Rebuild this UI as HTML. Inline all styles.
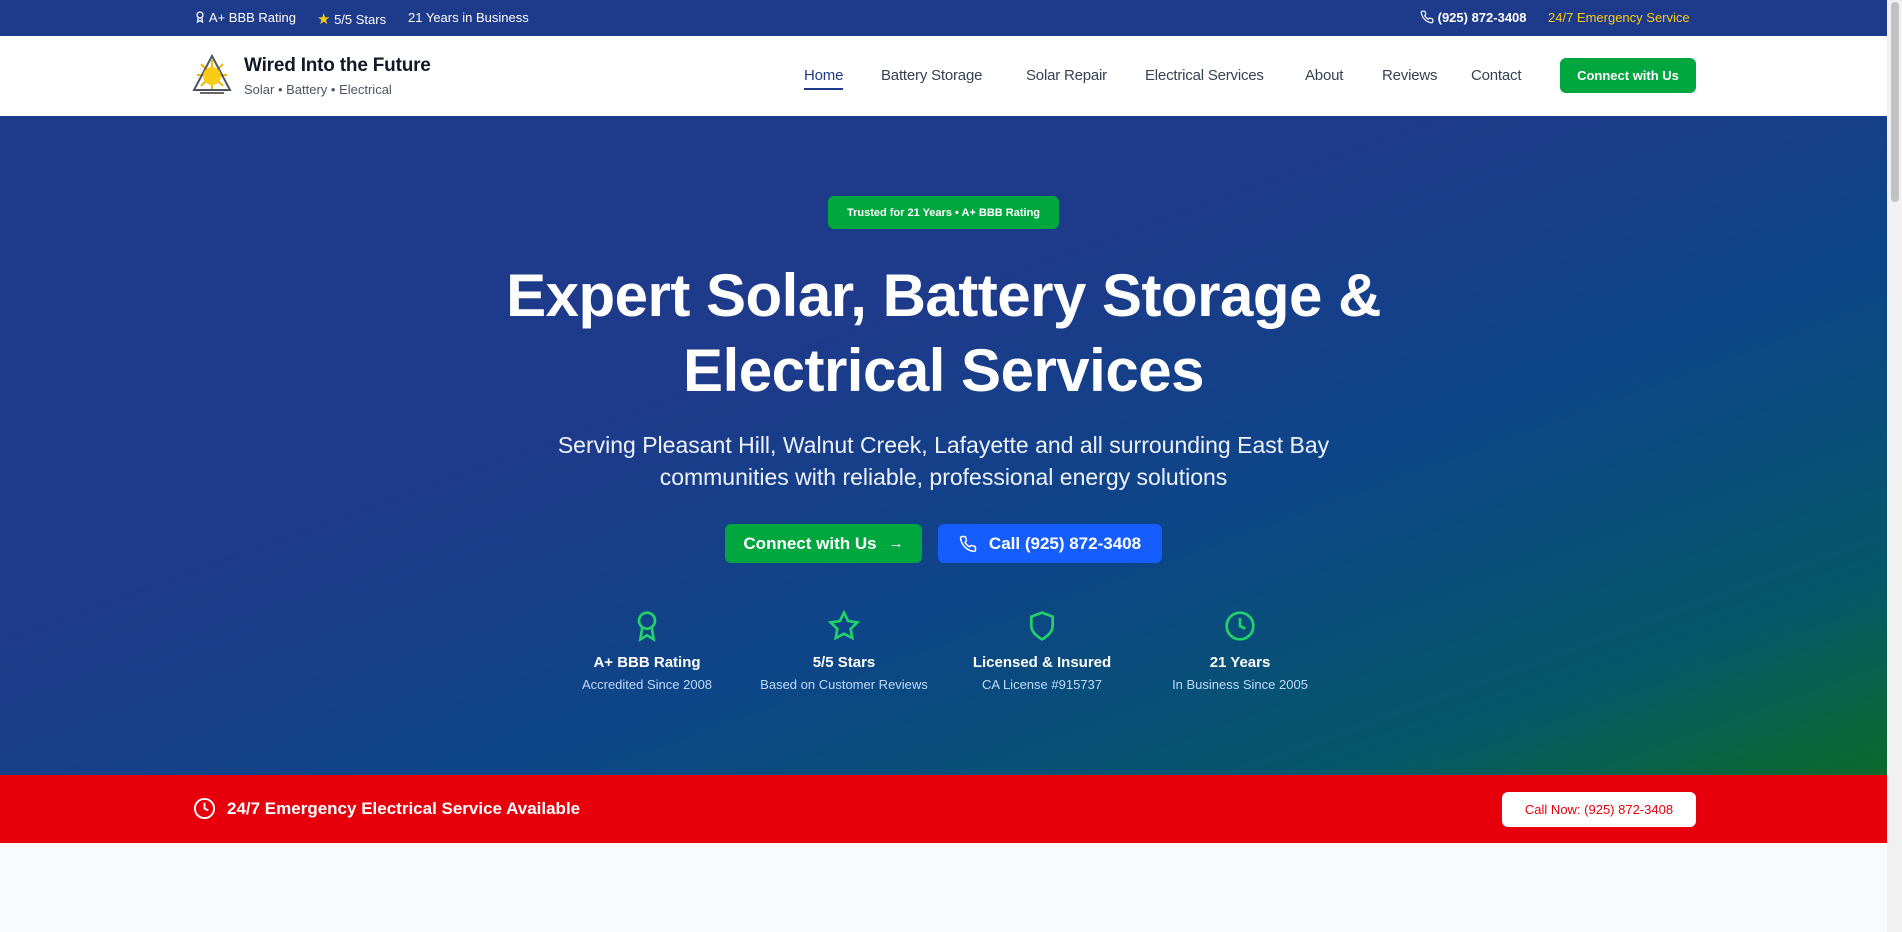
<!DOCTYPE html>
<html><head><meta charset="utf-8"><style>
*{margin:0;padding:0;box-sizing:border-box}
body{width:1902px;height:932px;overflow:hidden;font-family:"Liberation Sans",sans-serif;background:#f8fafc;position:relative}
.top{position:absolute;left:0;top:0;width:1887px;height:36px;background:#1e3a8a;color:#fff;font-size:13px}
.top span{position:absolute;top:10px;white-space:nowrap}
.nav{position:absolute;left:0;top:36px;width:1887px;height:80px;background:#fff}
.nav a{position:absolute;top:31px;font-size:15px;color:#374151;text-decoration:none;white-space:nowrap;letter-spacing:-0.2px}
.hero{position:absolute;left:0;top:116px;width:1887px;height:659px;background:linear-gradient(160deg,#1e3a8a 0%,#1e3a8a 38%,#0d4588 62%,#04586a 85%,#0a6b2a 100%)}
.c{position:absolute;left:0;width:1887px;text-align:center;color:#fff}
.btn{position:absolute;border-radius:6px;color:#fff;font-size:18px;font-weight:bold;display:flex;align-items:center;justify-content:center;gap:12px}
.f{position:absolute;top:610px;width:200px;text-align:center;color:#fff}
.f svg{display:block;margin:0 auto}
.f b{display:block;font-size:15px;margin-top:12px}
.f i{display:block;font-style:normal;font-size:13px;color:#bfdbfe;margin-top:6px}
.red{position:absolute;left:0;top:775px;width:1887px;height:68px;background:#e7000b;color:#fff}
.sb{position:absolute;right:0;top:0;width:15px;height:932px;background:#f1f1f1}
.sb div{position:absolute;left:4px;top:2px;width:8px;height:200px;background:#c1c1c1;border-radius:4px}
</style></head><body>
<div class="top">
<span style="left:194px"><svg width="12" height="14" viewBox="0 0 24 24" fill="none" stroke="#fff" stroke-width="2.5" style="vertical-align:-2px"><circle cx="12" cy="8" r="6"/><path d="M8.5 13 7 22l5-3 5 3-1.5-9"/></svg> A+ BBB Rating</span>
<span style="left:317px"><span style="color:#facc15;font-size:15px;position:static">★</span> 5/5 Stars</span>
<span style="left:408px">21 Years in Business</span>
<span style="left:1420px;font-weight:bold"><svg width="14" height="14" viewBox="0 0 24 24" fill="none" stroke="#fff" stroke-width="2" style="vertical-align:-2px"><path d="M22 16.9v3a2 2 0 0 1-2.2 2 19.8 19.8 0 0 1-8.6-3.1 19.5 19.5 0 0 1-6-6A19.8 19.8 0 0 1 2.1 4.2 2 2 0 0 1 4.1 2h3a2 2 0 0 1 2 1.7c.1.9.4 1.8.7 2.7a2 2 0 0 1-.5 2.1L8 9.8a16 16 0 0 0 6 6l1.3-1.3a2 2 0 0 1 2.1-.4c.9.3 1.8.6 2.7.7a2 2 0 0 1 1.7 2z"/></svg> (925) 872-3408</span>
<span style="left:1548px;color:#facc15">24/7 Emergency Service</span>
</div>
<div class="nav">
<svg style="position:absolute;left:190px;top:16px" width="44" height="46" viewBox="0 0 44 46"><g stroke="#f2b705" stroke-width="2"><line x1="22" y1="8" x2="22" y2="38"/><line x1="7" y1="23" x2="37" y2="23"/><line x1="11" y1="12" x2="33" y2="34"/><line x1="33" y1="12" x2="11" y2="34"/></g><polygon points="22,4 40,38 4,38" fill="none" stroke="#4b5563" stroke-width="2"/><circle cx="22" cy="24" r="9" fill="#facc15"/><rect x="10" y="40" width="24" height="2" fill="#666"/></svg>
<div style="position:absolute;left:244px;top:19px;font-size:19px;font-weight:bold;color:#111827;letter-spacing:-0.2px">Wired Into the Future</div>
<div style="position:absolute;left:244px;top:46px;font-size:13px;color:#4b5563">Solar • Battery • Electrical</div>
<a style="left:804px;color:#1e3a8a;border-bottom:2px solid #1e3a8a;padding-bottom:4px">Home</a>
<a style="left:881px">Battery Storage</a>
<a style="left:1026px">Solar Repair</a>
<a style="left:1145px">Electrical Services</a>
<a style="left:1305px">About</a>
<a style="left:1382px">Reviews</a>
<a style="left:1471px">Contact</a>
<div class="btn" style="left:1560px;top:22px;width:136px;height:35px;background:#00a63e;font-size:13px">Connect with Us</div>
</div>
<div class="hero">
<div class="btn" style="left:828px;top:80px;width:231px;height:33px;background:#00a63e;font-size:11px">Trusted for 21 Years • A+ BBB Rating</div>
<div class="c" style="top:142px;font-size:60px;font-weight:bold;line-height:75px;letter-spacing:-0.5px">Expert Solar, Battery Storage &amp;<br>Electrical Services</div>
<div class="c" style="top:313px;font-size:23px;line-height:32px;color:#eef2ff">Serving Pleasant Hill, Walnut Creek, Lafayette and all surrounding East Bay<br>communities with reliable, professional energy solutions</div>
<div class="btn" style="left:725px;top:408px;width:197px;height:39px;background:#00a63e;font-size:17px">Connect with Us <span style="font-size:15px">→</span></div>
<div class="btn" style="left:938px;top:408px;width:224px;height:39px;background:#155dfc;font-size:17px"><svg width="18" height="18" viewBox="0 0 24 24" fill="none" stroke="#fff" stroke-width="2"><path d="M22 16.9v3a2 2 0 0 1-2.2 2 19.8 19.8 0 0 1-8.6-3.1 19.5 19.5 0 0 1-6-6A19.8 19.8 0 0 1 2.1 4.2 2 2 0 0 1 4.1 2h3a2 2 0 0 1 2 1.7c.1.9.4 1.8.7 2.7a2 2 0 0 1-.5 2.1L8 9.8a16 16 0 0 0 6 6l1.3-1.3a2 2 0 0 1 2.1-.4c.9.3 1.8.6 2.7.7a2 2 0 0 1 1.7 2z"/></svg>Call (925) 872-3408</div>
<div class="f" style="left:547px;top:494px"><svg width="32" height="32" viewBox="0 0 24 24" fill="none" stroke="#22d36a" stroke-width="2"><circle cx="12" cy="8" r="6"/><path d="M8.5 13 7 22l5-3 5 3-1.5-9"/></svg><b>A+ BBB Rating</b><i>Accredited Since 2008</i></div>
<div class="f" style="left:744px;top:494px"><svg width="32" height="32" viewBox="0 0 24 24" fill="none" stroke="#22d36a" stroke-width="2"><polygon points="12 2 15.1 8.3 22 9.3 17 14.1 18.2 21 12 17.8 5.8 21 7 14.1 2 9.3 8.9 8.3"/></svg><b>5/5 Stars</b><i>Based on Customer Reviews</i></div>
<div class="f" style="left:942px;top:494px"><svg width="32" height="32" viewBox="0 0 24 24" fill="none" stroke="#22d36a" stroke-width="2"><path d="M12 22s8-4 8-10V5l-8-3-8 3v7c0 6 8 10 8 10z"/></svg><b>Licensed &amp; Insured</b><i>CA License #915737</i></div>
<div class="f" style="left:1140px;top:494px"><svg width="32" height="32" viewBox="0 0 24 24" fill="none" stroke="#22d36a" stroke-width="2"><circle cx="12" cy="12" r="10"/><path d="M12 6v6l4 2"/></svg><b>21 Years</b><i>In Business Since 2005</i></div>
</div>
<div class="red">
<svg style="position:absolute;left:193px;top:22px" width="23" height="23" viewBox="0 0 24 24" fill="none" stroke="#fff" stroke-width="2"><circle cx="12" cy="12" r="10"/><path d="M12 6v6l4 2"/></svg>
<div style="position:absolute;left:227px;top:24px;font-size:17px;font-weight:bold">24/7 Emergency Electrical Service Available</div>
<div class="btn" style="left:1502px;top:17px;width:194px;height:35px;background:#fff;color:#e7000b;font-size:13px;font-weight:normal">Call Now: (925) 872-3408</div>
</div>
<div class="sb"><div></div></div>
</body></html>
